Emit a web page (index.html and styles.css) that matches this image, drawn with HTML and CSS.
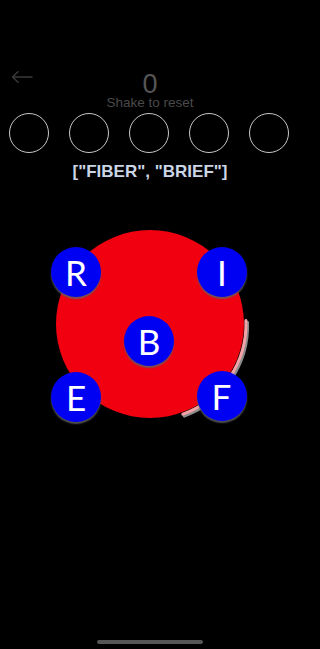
FILE: index.html
```html
<!DOCTYPE html>
<html>
<head>
<meta charset="utf-8">
<link rel="stylesheet" href="styles.css">
</head>
<body>
<div class="screen">
  <header class="topbar">
    <div class="back">
      <svg class="back-icon" width="22" height="12" viewBox="0 0 22 12">
        <path d="M21 6 H1.5 M7 0.8 L1.5 6 L7 11.2" fill="none" stroke="#3a3a3a" stroke-width="1.4" stroke-linecap="round" stroke-linejoin="round"/>
      </svg>
    </div>
    <div class="score">
      <div class="score-num">0</div>
      <div class="score-hint">Shake to reset</div>
    </div>
    <div></div>
  </header>

  <div class="slots">
    <div class="slot"></div>
    <div class="slot"></div>
    <div class="slot"></div>
    <div class="slot"></div>
    <div class="slot"></div>
  </div>

  <div class="words">["FIBER", "BRIEF"]</div>

  <div class="board">
    <svg class="board-bg" width="300" height="200" viewBox="0 0 300 200">
      <circle cx="150" cy="94" r="94" fill="#f10010"/>
      <path d="M245.9 90.6 A96 96 0 0 1 182.8 184.2" transform="translate(1.5 1.8)" fill="none" stroke="#8c8c8c" stroke-width="3.2" stroke-linecap="round"/>
      <path d="M245.9 90.6 A96 96 0 0 1 182.8 184.2" fill="none" stroke="#f4a2a6" stroke-width="3" stroke-linecap="round"/>
    </svg>
    <div class="tile tile-r">R</div>
    <div class="tile tile-i">I</div>
    <div class="tile tile-b">B</div>
    <div class="tile tile-e">E</div>
    <div class="tile tile-f">F</div>
  </div>

  <div class="home-indicator"></div>
</div>
</body>
</html>
```

FILE: styles.css
```css
html, body {
  margin: 0;
  padding: 0;
  background: #000;
}

.screen {
  width: 300px;
  min-height: 649px;
  display: flex;
  flex-direction: column;
  font-family: "Liberation Sans", Arial, sans-serif;
}

.topbar {
  display: grid;
  grid-template-columns: 1fr auto 1fr;
  padding-top: 71px;
}

.back {
  padding-left: 11px;
  align-self: start;
}

.back-icon {
  display: block;
}

.score {
  display: flex;
  flex-direction: column;
  align-items: center;
}

.score-num {
  font-size: 27px;
  line-height: 22px;
  margin-top: 2px;
  color: #555;
}

.score-hint {
  font-size: 13.5px;
  line-height: 12px;
  margin-top: 1.5px;
  color: #4a4a4a;
}

.slots {
  display: flex;
  gap: 20px;
  padding-left: 9px;
  margin-top: 4px;
}

.slot {
  width: 40px;
  height: 40px;
  box-sizing: border-box;
  border: 1px solid #c8c8c8;
  border-radius: 50%;
}

.words {
  margin-top: 9px;
  text-align: center;
  font-weight: bold;
  font-size: 17px;
  line-height: 20px;
  color: #cbd5e6;
}

.board {
  position: relative;
  width: 300px;
  height: 200px;
  margin-top: 48.5px;
}

.board-bg {
  position: absolute;
  left: 0;
  top: 0;
  display: block;
}

.tile {
  position: absolute;
  width: 50px;
  height: 50px;
  border-radius: 50%;
  background: #0000f2;
  box-shadow: 0 2px 1.5px rgba(95, 95, 95, 0.85);
  color: #fff;
  font-family: Lato, "Open Sans", sans-serif;
  font-size: 35px;
  line-height: 50px;
  text-align: center;
}

.tile-r { left: 51px; top: 17px; }
.tile-i { left: 197px; top: 17px; }
.tile-b { left: 124px; top: 85.5px; }
.tile-e { left: 51px; top: 141.5px; }
.tile-f { left: 196.5px; top: 141px; }

.home-indicator {
  margin: auto auto 5px;
  width: 106px;
  height: 4px;
  border-radius: 2px;
  background: #555;
}
```
